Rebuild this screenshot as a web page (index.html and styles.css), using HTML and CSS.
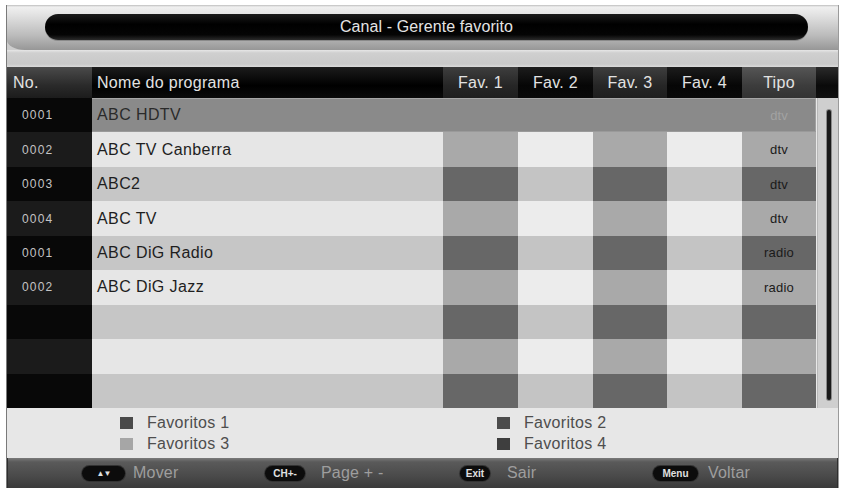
FILE: index.html
```html
<!DOCTYPE html>
<html lang="pt">
<head>
<meta charset="utf-8">
<title>Canal - Gerente favorito</title>
<link rel="stylesheet" href="styles.css">
</head>
<body>
<div class="frame">
  <div class="title-band">
    <div class="title-pill">Canal - Gerente favorito</div>
  </div>
  <div class="sub-band"></div>
  <div class="header">
    <div class="h h-no">No.</div>
    <div class="h h-name">Nome do programa</div>
    <div class="h h-a">Fav. 1</div>
    <div class="h h-b">Fav. 2</div>
    <div class="h h-a">Fav. 3</div>
    <div class="h h-b">Fav. 4</div>
    <div class="h h-tipo">Tipo</div>
    <div class="h h-end"></div>
  </div>
  <div class="body">
    <div class="list">
      <div class="row sel">
        <div class="num odd">0001</div>
        <div class="selbar"><span class="sel-name">ABC HDTV</span><span class="sel-tipo">dtv</span></div>
      </div>
      <div class="row lt">
        <div class="num even">0002</div>
        <div class="name">ABC TV Canberra</div>
        <div class="fa"></div><div class="fb"></div><div class="fa"></div><div class="fb"></div>
        <div class="fa tipo">dtv</div>
      </div>
      <div class="row md">
        <div class="num odd">0003</div>
        <div class="name">ABC2</div>
        <div class="fa"></div><div class="fb"></div><div class="fa"></div><div class="fb"></div>
        <div class="fa tipo">dtv</div>
      </div>
      <div class="row lt">
        <div class="num even">0004</div>
        <div class="name">ABC TV</div>
        <div class="fa"></div><div class="fb"></div><div class="fa"></div><div class="fb"></div>
        <div class="fa tipo">dtv</div>
      </div>
      <div class="row md">
        <div class="num odd">0001</div>
        <div class="name">ABC DiG Radio</div>
        <div class="fa"></div><div class="fb"></div><div class="fa"></div><div class="fb"></div>
        <div class="fa tipo">radio</div>
      </div>
      <div class="row lt">
        <div class="num even">0002</div>
        <div class="name">ABC DiG Jazz</div>
        <div class="fa"></div><div class="fb"></div><div class="fa"></div><div class="fb"></div>
        <div class="fa tipo">radio</div>
      </div>
      <div class="row md">
        <div class="num odd"></div>
        <div class="name"></div>
        <div class="fa"></div><div class="fb"></div><div class="fa"></div><div class="fb"></div>
        <div class="fa tipo"></div>
      </div>
      <div class="row lt">
        <div class="num even"></div>
        <div class="name"></div>
        <div class="fa"></div><div class="fb"></div><div class="fa"></div><div class="fb"></div>
        <div class="fa tipo"></div>
      </div>
      <div class="row md">
        <div class="num odd"></div>
        <div class="name"></div>
        <div class="fa"></div><div class="fb"></div><div class="fa"></div><div class="fb"></div>
        <div class="fa tipo"></div>
      </div>
    </div>
    <div class="scroll"><div class="scroll-track"></div></div>
  </div>
  <div class="legend">
    <div class="leg"><span class="sq sq1"></span>Favoritos 1</div>
    <div class="leg"><span class="sq sq2"></span>Favoritos 2</div>
    <div class="leg"><span class="sq sq3"></span>Favoritos 3</div>
    <div class="leg"><span class="sq sq4"></span>Favoritos 4</div>
  </div>
  <div class="footer">
    <div class="fitem"><span class="key key-arrows">▲▼</span><span class="flabel">Mover</span></div>
    <div class="fitem"><span class="key key-ch">CH+-</span><span class="flabel">Page + -</span></div>
    <div class="fitem"><span class="key key-exit">Exit</span><span class="flabel">Sair</span></div>
    <div class="fitem"><span class="key key-menu">Menu</span><span class="flabel">Voltar</span></div>
  </div>
</div>
</body>
</html>
```

FILE: styles.css
```css
html, body {
  margin: 0;
  padding: 0;
  background: #ffffff;
}
body {
  padding: 5px 7px 4px 7px;
  font-family: "Liberation Sans", Arial, sans-serif;
}
.frame {
  width: 831px;
  height: 483px;
  display: flex;
  flex-direction: column;
  background: #cdcdcd;
  box-shadow: -1px 0 0 #7a7a7a, 1px 0 0 #9a9a9a;
  overflow: hidden;
}
.title-band {
  height: 45px;
  flex: none;
  background: linear-gradient(to bottom, #bdbdbd 0px, #f0f0f0 2px, #e2e2e2 10px, #bcbcbc 30px, #979797 45px);
  display: flex;
  align-items: flex-start;
  padding: 9px 30px 0 38px;
  box-sizing: border-box;
  border-bottom-left-radius: 18px 10px;
}
.title-pill {
  flex: 1;
  height: 26px;
  border-radius: 13px;
  background: linear-gradient(to bottom, #1a1a1a, #000 40%, #050505 80%, #2a2a2a);
  box-shadow: 0 1px 0 #8a8a8a;
  color: #e4e4e4;
  font-size: 16px;
  letter-spacing: 0.1px;
  display: flex;
  align-items: center;
  justify-content: center;
}
.sub-band {
  height: 17px;
  flex: none;
  background: linear-gradient(to bottom, #e6e6e6 0px, #cfcfcf 3px, #c9c9c9 14px, #dadada 17px);
}
.header {
  height: 31px;
  flex: none;
  display: grid;
  grid-template-columns: 85px 351px 75px 75px 74px 75px 74px 22px;
  color: #e2e2e2;
  font-size: 16px;
  letter-spacing: 0.3px;
}
.h {
  display: flex;
  align-items: center;
  justify-content: center;
}
.h-no {
  justify-content: flex-start;
  padding-left: 6px;
  background: linear-gradient(to bottom, #4a4a4a, #2a2a2a 60%, #1c1c1c);
}
.h-name {
  justify-content: flex-start;
  padding-left: 5px;
  background: linear-gradient(to bottom, #1c1c1c, #000 60%, #0a0a0a);
}
.h-a {
  background: linear-gradient(to bottom, #3e3e3e, #262626 60%, #1e1e1e);
}
.h-b {
  background: linear-gradient(to bottom, #1c1c1c, #060606 60%, #0a0a0a);
}
.h-tipo {
  background: linear-gradient(to bottom, #555, #3c3c3c 60%, #333);
}
.h-end {
  background: linear-gradient(to bottom, #2a2a2a, #0a0a0a 60%, #111);
}
.body {
  height: 310px;
  flex: none;
  display: grid;
  grid-template-columns: 809px 22px;
}
.list {
  display: grid;
  grid-template-rows: repeat(9, 1fr);
}
.row {
  display: grid;
  grid-template-columns: 85px 351px 75px 75px 74px 75px 74px;
}
.num {
  color: #c4c4c4;
  font-size: 12px;
  letter-spacing: 1.2px;
  padding-left: 15px;
  display: flex;
  align-items: center;
}
.num.odd { background: #080808; }
.num.even { background: #1b1b1b; }
.name {
  color: #1e1e1e;
  font-size: 16px;
  letter-spacing: 0.4px;
  padding-left: 5px;
  display: flex;
  align-items: center;
}
.lt .name { background: #e6e6e6; }
.md .name { background: #c6c6c6; }
.lt .fa { background: #a9a9a9; }
.md .fa { background: #676767; }
.lt .fb { background: #ececec; }
.md .fb { background: #c4c4c4; }
.tipo {
  color: #1a1a1a;
  font-size: 13px;
  letter-spacing: 0.2px;
  display: flex;
  align-items: center;
  justify-content: center;
}
.selbar {
  grid-column: 2 / -1;
  background: #8a8a8a;
  box-shadow: inset 0 1px 0 #a6a6a6, inset 0 -1px 0 #9a9a9a, inset -1px 0 0 #a0a0a0;
  display: flex;
  align-items: center;
  justify-content: space-between;
}
.sel-name {
  color: #2a2a2a;
  font-size: 16px;
  letter-spacing: 0.4px;
  padding-left: 5px;
}
.sel-tipo {
  width: 74px;
  text-align: center;
  color: #a2a2a2;
  font-size: 13px;
}
.scroll {
  background: #cfcfcf;
  box-shadow: inset 1px 0 0 #e8e8e8, inset 2px 0 0 #b8b8b8;
  display: flex;
  justify-content: center;
  padding: 12px 0 8px 4px;
}
.scroll-track {
  width: 4px;
  border-radius: 2px;
  background: #1a1a1a;
  box-shadow: 0 0 0 1px #8a8a8a;
}
.legend {
  height: 50px;
  flex: none;
  background: #e7e7e7;
  display: grid;
  grid-template-columns: 377px auto;
  grid-template-rows: 21px 21px;
  padding: 4px 0 0 113px;
  box-sizing: border-box;
  color: #4e4e4e;
  font-size: 16px;
  letter-spacing: 0.3px;
}
.leg {
  display: flex;
  align-items: center;
}
.sq {
  width: 13px;
  height: 12px;
  margin-right: 14px;
}
.sq1 { background: #4a4a4a; }
.sq2 { background: #4c4c4c; }
.sq3 { background: #a6a6a6; }
.sq4 { background: #3e3e3e; }
.footer {
  height: 30px;
  flex: none;
  background: linear-gradient(to bottom, #7a7a7a 0px, #5a5a5a 4px, #4a4a4a 18px, #3a3a3a 30px);
  display: grid;
  grid-template-columns: 183px 195px 193px auto;
  padding-left: 75px;
  box-sizing: border-box;
  box-shadow: inset 38px 0 0 -37px #2e2e2e, inset -38px 0 0 -37px #2e2e2e;
}
.fitem {
  display: flex;
  align-items: center;
}
.key {
  background: #0c0c0c;
  color: #e0e0e0;
  border-radius: 8px;
  height: 15px;
  font-size: 10px;
  font-weight: bold;
  display: flex;
  align-items: center;
  justify-content: center;
  box-shadow: 0 0 0 1px #333;
  margin-right: 8px;
}
.key-arrows { width: 43px; font-size: 8px; letter-spacing: -1px; }
.key-ch { width: 40px; margin-right: 16px; }
.key-exit { width: 30px; margin-right: 17px; }
.key-menu { width: 45px; margin-right: 10px; }
.flabel {
  color: #9e9e9e;
  font-size: 16px;
  letter-spacing: 0.2px;
}
```
